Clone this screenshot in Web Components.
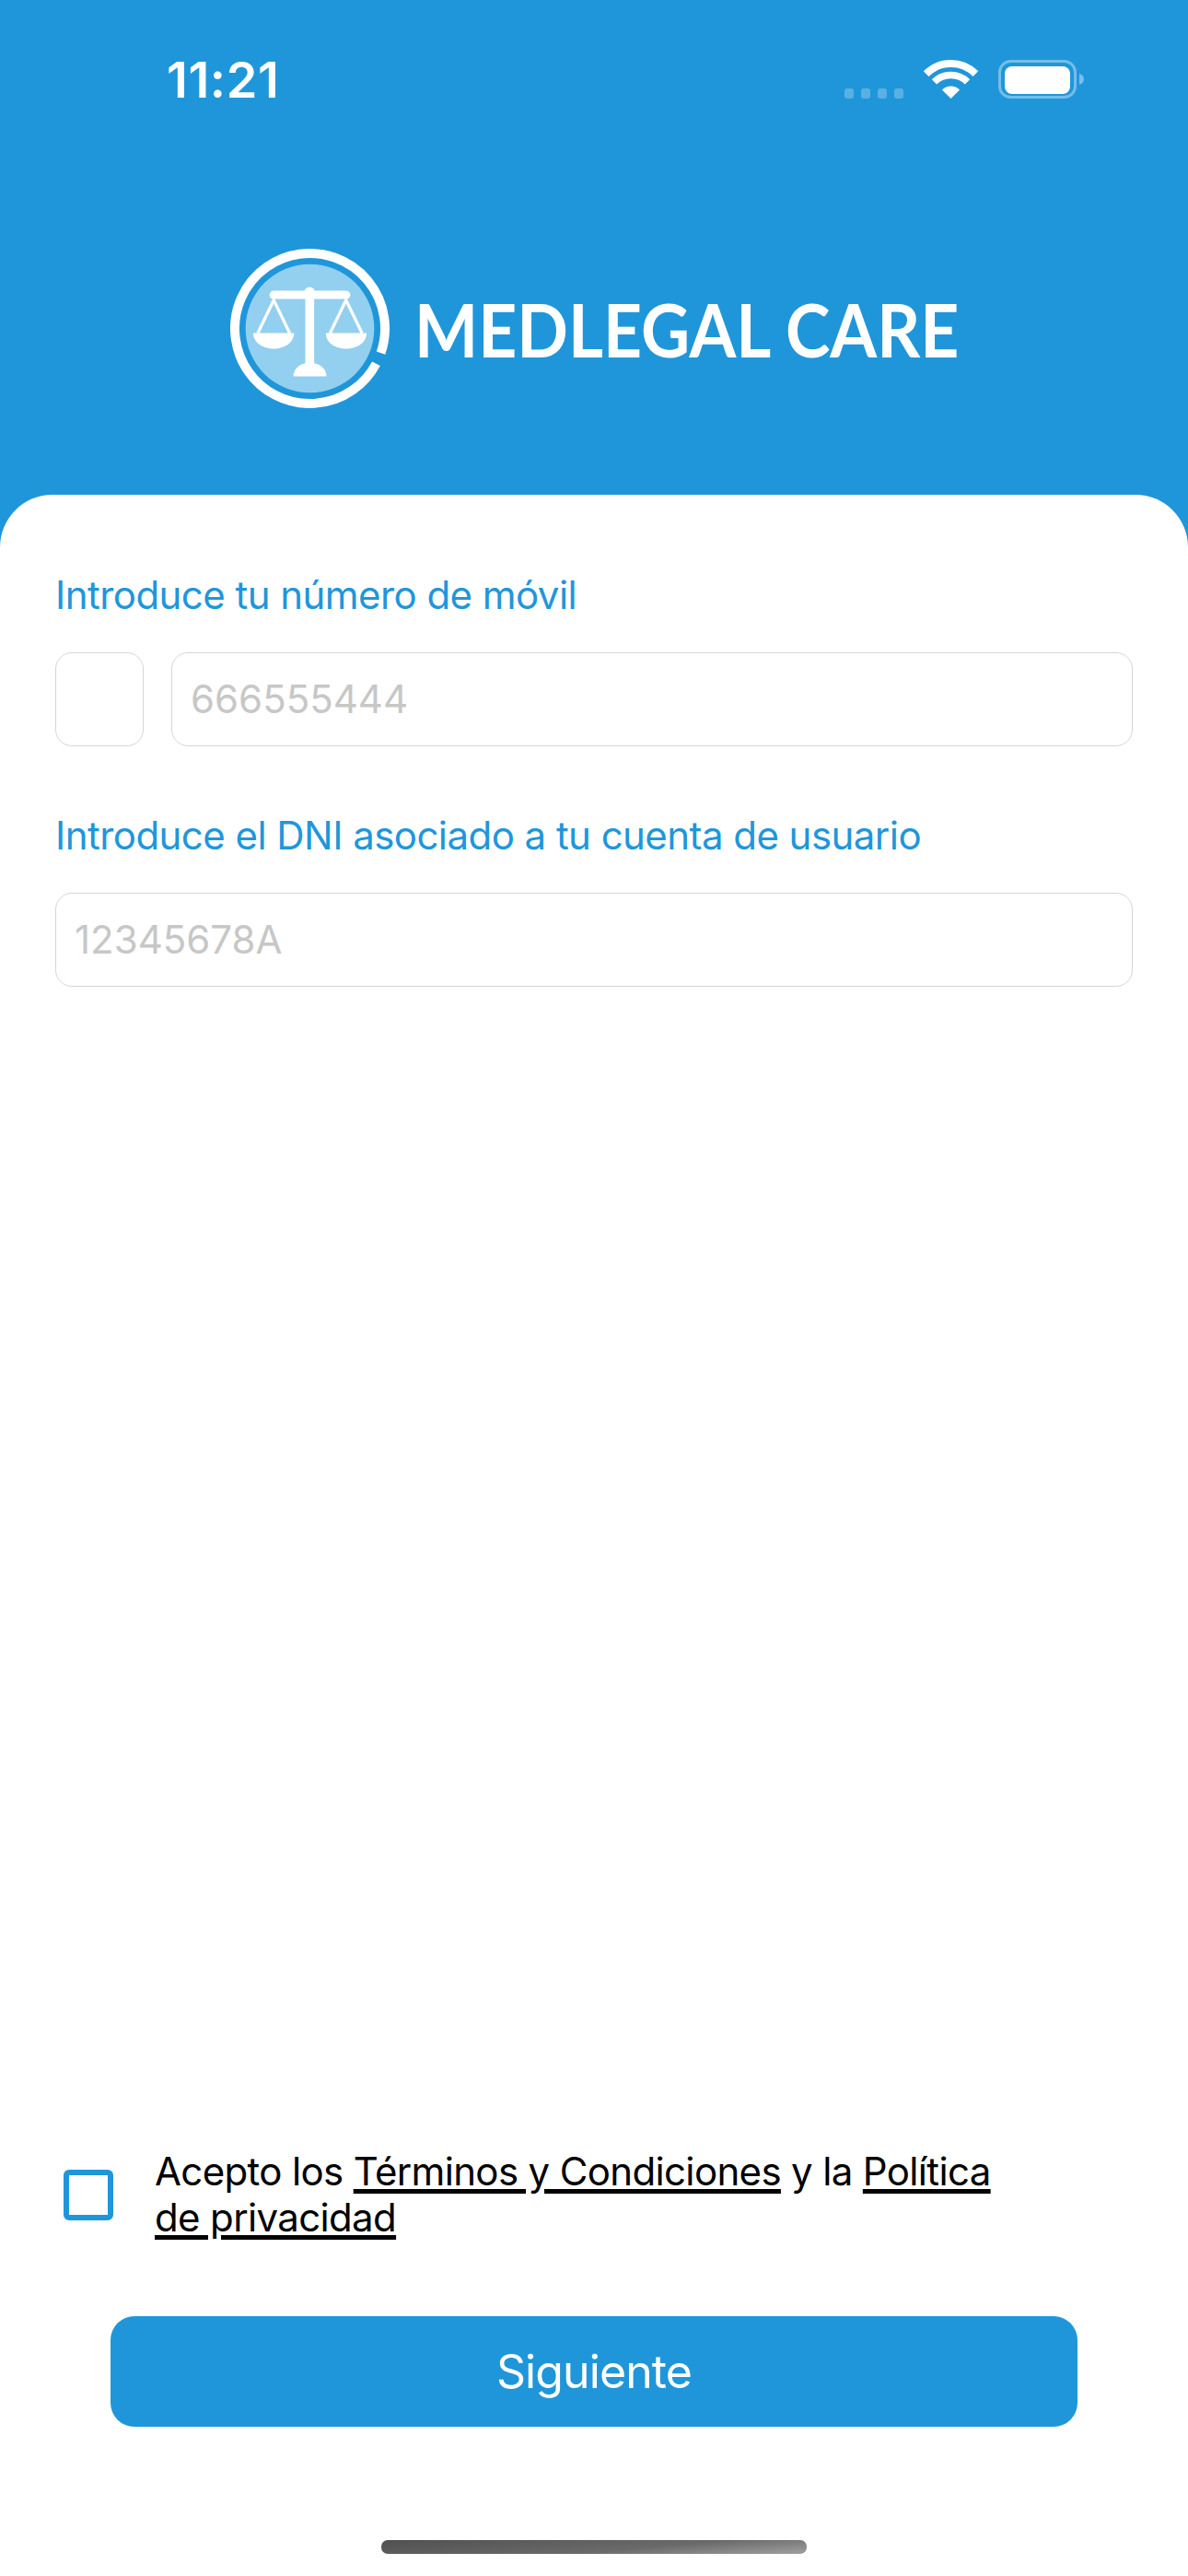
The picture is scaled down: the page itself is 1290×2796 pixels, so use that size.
<!DOCTYPE html>
<html lang="es">
<head>
<meta charset="utf-8">
<title>Medlegal Care</title>
<style>
  html, body { margin: 0; padding: 0; }
  body { font-family: Inter, "Liberation Sans", sans-serif; }
</style>
</head>
<body>
<app-screen>
  <status-bar slot="header" time="11:21"></status-bar>
  <brand-logo slot="header">MEDLEGAL CARE</brand-logo>

  <form-field label="Introduce tu número de móvil">
    <text-box class="prefix"></text-box>
    <text-box>666555444</text-box>
  </form-field>
  <form-field label="Introduce el DNI asociado a tu cuenta de usuario">
    <text-box>12345678A</text-box>
  </form-field>

  <terms-check slot="footer">Acepto los <a>Términos y Condiciones</a> y la <a>Política</a> <a>de privacidad</a></terms-check>
  <primary-button slot="footer">Siguiente</primary-button>
  <home-bar slot="footer"></home-bar>
</app-screen>

<script>
class AppScreen extends HTMLElement {
  constructor() {
    super();
    this.attachShadow({ mode: 'open' }).innerHTML = `
      <style>
        :host { display: flex; flex-direction: column; width: 1290px; height: 2796px; background: #2096da; overflow: hidden; }
        .top { height: 537px; flex: none; }
        .card { flex: 1; display: flex; flex-direction: column; background: #fff; border-radius: 57px 57px 0 0; padding: 84px 60px 0; box-sizing: border-box; }
        .bottom { margin-top: auto; }
      </style>
      <div class="top"><slot name="header"></slot></div>
      <div class="card">
        <slot></slot>
        <div class="bottom"><slot name="footer"></slot></div>
      </div>`;
  }
}

class StatusBar extends HTMLElement {
  constructor() {
    super();
    this.attachShadow({ mode: 'open' }).innerHTML = `
      <style>
        :host { display: flex; justify-content: space-between; align-items: flex-end; height: 107px; padding: 0 113px 0 181px; box-sizing: border-box; color: #fff; }
        .time { font: 600 54px/54px Inter, sans-serif; letter-spacing: .6px; margin-bottom: -7px; }
        .icons { display: flex; align-items: flex-end; }
        .dots { display: flex; gap: 8px; margin-right: 22px; }
        .dots i { width: 10px; height: 11px; border-radius: 3px; background: rgba(255,255,255,.26); }
        svg { display: block; }
        .wifi { margin-right: 22px; }
      </style>
      <span class="time"></span>
      <div class="icons">
        <div class="dots"><i></i><i></i><i></i><i></i></div>
        <svg class="wifi" width="59" height="42" viewBox="0 0 59 42" fill="none" stroke="#fff">
          <path d="M2.63 15.13A38 38 0 0 1 56.37 15.13" stroke-width="8"/>
          <path d="M11.47 23.97A25.5 25.5 0 0 1 47.53 23.97" stroke-width="7.5"/>
          <path d="M29.5 42L19.95 32.45A13.5 13.5 0 0 1 39.05 32.45Z" fill="#fff" stroke="none"/>
        </svg>
        <svg width="93" height="42" viewBox="0 0 93 42">
          <rect x="1.5" y="1.5" width="82" height="39" rx="12" fill="none" stroke="#fff" stroke-opacity=".38" stroke-width="3"/>
          <rect x="7" y="7" width="71" height="30" rx="8" fill="#fff"/>
          <path d="M88 15c3 1 5 3 5 6s-2 5-5 6Z" fill="#fff" fill-opacity=".4"/>
        </svg>
      </div>`;
    this.shadowRoot.querySelector('.time').textContent = this.getAttribute('time');
  }
}

class BrandLogo extends HTMLElement {
  constructor() {
    super();
    this.attachShadow({ mode: 'open' }).innerHTML = `
      <style>
        :host { display: flex; align-items: center; gap: 27px; padding: 163px 0 0 250px; color: #fff; }
        svg { display: block; flex: none; }
        .name { font: 700 80px/80px Lato, sans-serif; white-space: nowrap; transform: scaleX(.915); transform-origin: left center; }
      </style>
      <svg width="173" height="173" viewBox="90 60 520 520">
        <circle cx="350" cy="320" r="210" fill="#93cfee"/>
        <path d="M581.65 399.76A245 245 0 1 0 566.32 435.03" fill="none" stroke="#fff" stroke-width="30"/>
        <g fill="#fff">
          <rect x="218" y="197" width="264" height="27" rx="13.5"/>
          <circle cx="349" cy="202" r="17"/>
          <rect x="335" y="200" width="29" height="240"/>
          <path d="M296 476C296 450 320 432 350 432S404 450 404 476Z"/>
          <path d="M165 335H298C298 366 268 386 232 386S165 366 165 335Z"/>
          <path d="M402 335H535C535 366 505 386 468 386S402 366 402 335Z"/>
        </g>
        <g fill="none" stroke="#fff" stroke-width="10">
          <path d="M180 335L232 228L284 335"/>
          <path d="M416 335L468 228L520 335"/>
        </g>
      </svg>
      <span class="name"><slot></slot></span>`;
  }
}

class FormField extends HTMLElement {
  constructor() {
    super();
    this.attachShadow({ mode: 'open' }).innerHTML = `
      <style>
        :host { display: block; margin-bottom: 72px; }
        .label { font: 400 42px/50px Inter, sans-serif; letter-spacing: -.55px; color: #2096da; margin-bottom: 37px; }
        .row { display: flex; gap: 30px; }
      </style>
      <div class="label"></div>
      <div class="row"><slot></slot></div>`;
    this.shadowRoot.querySelector('.label').textContent = this.getAttribute('label');
  }
}

class TextBox extends HTMLElement {
  constructor() {
    super();
    this.attachShadow({ mode: 'open' }).innerHTML = `
      <style>
        :host { flex: 1; display: flex; align-items: center; height: 102px; box-sizing: border-box; padding: 0 20px; border: 1.5px solid #d6d6d6; border-radius: 18px; color: #c7c7c7; font: 400 42px/50px Inter, sans-serif; }
        :host(.prefix) { flex: none; width: 96px; }
      </style>
      <slot></slot>`;
  }
}

class TermsCheck extends HTMLElement {
  constructor() {
    super();
    this.attachShadow({ mode: 'open' }).innerHTML = `
      <style>
        :host { display: flex; align-items: center; gap: 45px; padding-left: 9px; color: #000; font: 400 42px/50px Inter, sans-serif; letter-spacing: -.65px; }
        .box { flex: none; width: 54px; height: 55px; box-sizing: border-box; border: 6px solid #2096da; border-radius: 6px; }
        .text { width: 920px; }
        ::slotted(a) { text-decoration: underline; text-decoration-thickness: 5px; text-underline-offset: 4px; }
      </style>
      <div class="box"></div>
      <div class="text"><slot></slot></div>`;
  }
}

class PrimaryButton extends HTMLElement {
  constructor() {
    super();
    this.attachShadow({ mode: 'open' }).innerHTML = `
      <style>
        :host { display: flex; align-items: center; justify-content: center; height: 120px; margin: 82px 60px 0; background: #2096da; border-radius: 26px; color: #fff; font: 400 50px/60px Inter, sans-serif; letter-spacing: -.9px; }
      </style>
      <slot></slot>`;
  }
}

class HomeBar extends HTMLElement {
  constructor() {
    super();
    this.attachShadow({ mode: 'open' }).innerHTML = `
      <style>
        :host { display: block; width: 462px; height: 15px; margin: 123px auto 24px; border-radius: 7px; background: linear-gradient(175deg, #505050 0%, #6a6a6a 60%, #a0a0a0 100%); }
      </style>`;
  }
}

customElements.define('app-screen', AppScreen);
customElements.define('status-bar', StatusBar);
customElements.define('brand-logo', BrandLogo);
customElements.define('form-field', FormField);
customElements.define('text-box', TextBox);
customElements.define('terms-check', TermsCheck);
customElements.define('primary-button', PrimaryButton);
customElements.define('home-bar', HomeBar);
</script>
</body>
</html>
